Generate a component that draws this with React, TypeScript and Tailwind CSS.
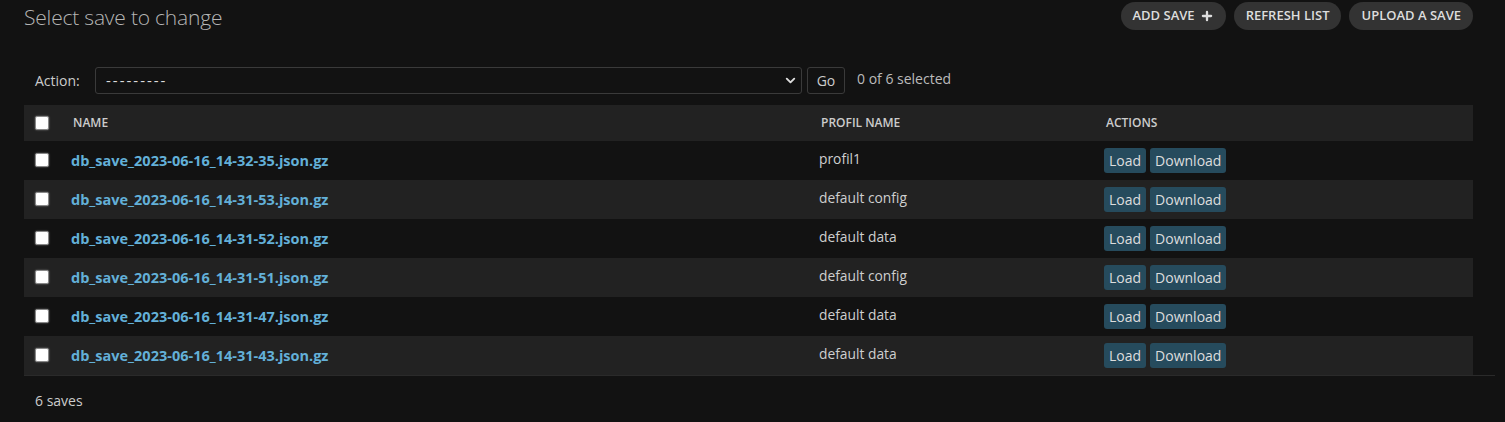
import React from 'react';
import { Plus, ChevronDown } from 'lucide-react';

const saves = [
  { file: 'db_save_2023-06-16_14-32-35.json.gz', profile: 'profil1' },
  { file: 'db_save_2023-06-16_14-31-53.json.gz', profile: 'default config' },
  { file: 'db_save_2023-06-16_14-31-52.json.gz', profile: 'default data' },
  { file: 'db_save_2023-06-16_14-31-51.json.gz', profile: 'default config' },
  { file: 'db_save_2023-06-16_14-31-47.json.gz', profile: 'default data' },
  { file: 'db_save_2023-06-16_14-31-43.json.gz', profile: 'default data' },
];

const Check = () => (
  <span className="block w-[14px] h-[14px] bg-white rounded-[2px] border border-[#888] shadow-[0_0_2px_rgba(255,255,255,0.4)]"></span>
);

const App: React.FC = () => {
  return (
    <div className="w-[1505px] h-[422px] bg-[#121212] text-[#d0d0d0] font-['Open_Sans',sans-serif] overflow-hidden">
      <div className="flex items-start justify-between pl-6 pr-8">
        <h1 className="text-[21px] font-light text-[#b5b5b5] pt-[2px] tracking-[-0.2px]">Select save to change</h1>
        <div className="flex gap-2 pt-[2px]">
          <button className="h-[28px] px-[12px] rounded-full bg-[#333] text-[13px] font-semibold text-[#ddd] flex items-center gap-[5px]">
            ADD SAVE <Plus size={14} strokeWidth={4} />
          </button>
          <button className="h-[28px] px-[12px] rounded-full bg-[#333] text-[13px] font-semibold text-[#ddd]">REFRESH LIST</button>
          <button className="h-[28px] px-[12px] rounded-full bg-[#333] text-[13px] font-semibold text-[#ddd]">UPLOAD A SAVE</button>
        </div>
      </div>

      <div className="flex items-center pl-[35px] mt-[33px] h-[27px] text-[14px]">
        <span className="text-[#ccc] w-[60px]">Action:</span>
        <div className="w-[707px] h-[27px] border border-[#3a3a3a] rounded-[3px] flex items-center justify-between pl-[10px] pr-[3px] text-[#ddd]">
          <span className="tracking-[2px] text-[15px]">---------</span>
          <ChevronDown size={15} strokeWidth={3} className="text-[#ddd]" />
        </div>
        <button className="ml-[5px] w-[38px] h-[27px] border border-[#3a3a3a] rounded-[3px] text-[#ccc] text-[14px]">Go</button>
        <span className="ml-[12px] text-[#bbb] -mt-[3px]">0 of 6 selected</span>
      </div>

      <div className="mt-[11px] ml-6 w-[1471px] border-b border-[#2a2a2a]">
        <div className="w-[1449px]">
          <div className="grid grid-cols-[47px_750px_285px_1fr] items-center h-[36px] bg-[#222] text-[12px] font-semibold text-[#ccc]">
            <div className="pl-[11px]"><Check /></div>
            <div className="pl-[2px]">NAME</div>
            <div className="pl-0">PROFIL NAME</div>
            <div>ACTIONS</div>
          </div>
          {saves.map((s, i) => (
            <div
              key={s.file}
              className={`grid grid-cols-[47px_750px_285px_1fr] items-center h-[39px] ${i % 2 === 1 ? 'bg-[#222]' : 'bg-[#121212]'}`}
            >
              <div className="pl-[11px] -mt-[1px]"><Check /></div>
              <div className="-mt-[1px]"><a className="text-[#63b0d8] font-bold text-[14.5px]">{s.file}</a></div>
              <div className="-mt-[1px] text-[#cfcfcf] -ml-[2px] text-[13.8px]">{s.profile}</div>
              <div className="flex gap-1 -ml-[2px] mt-[1px]">
                <button className="h-[25px] px-[5px] rounded-[3px] bg-[#264b5d] text-[#ddd] text-[14px]">Load</button>
                <button className="h-[25px] px-[5px] rounded-[3px] bg-[#264b5d] text-[#ddd] text-[14px]">Download</button>
              </div>
            </div>
          ))}
        </div>
      </div>

      <div className="pl-[35px] mt-[14px] text-[14px] text-[#ccc]">6 saves</div>
    </div>
  );
};

export default App;
